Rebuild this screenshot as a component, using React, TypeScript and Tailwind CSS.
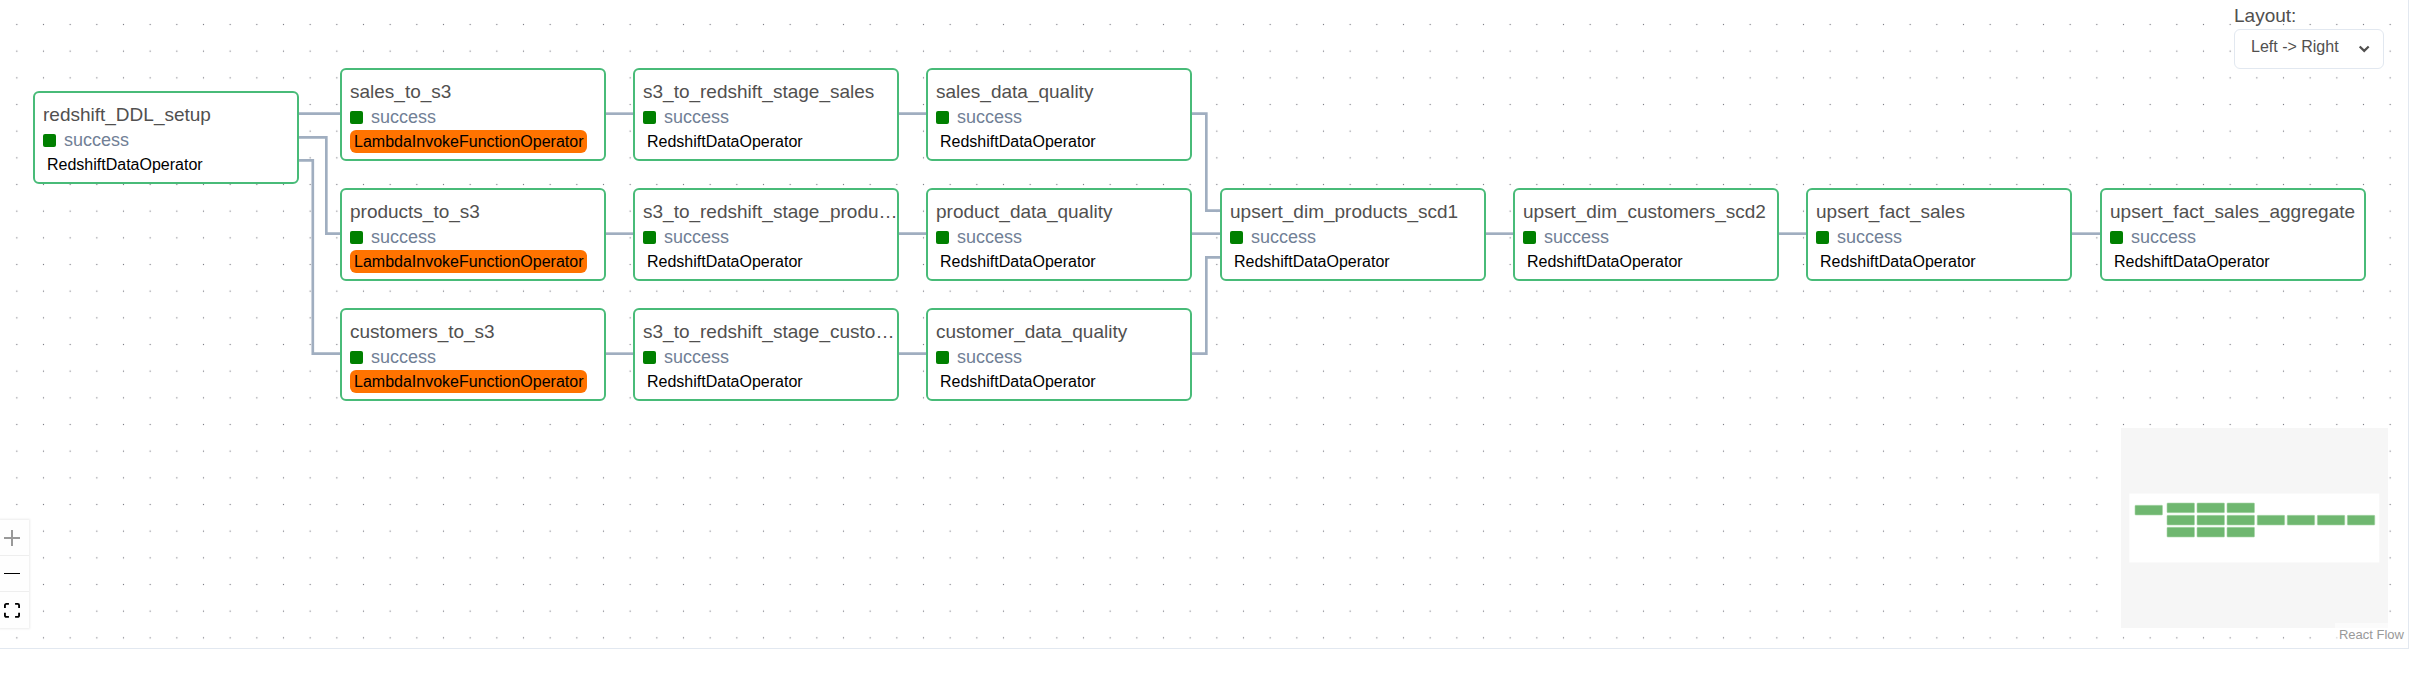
import React from "react";

type TaskNode = {
  name: string;
  x: number;
  y: number;
  operator: string;
};

const REDSHIFT = "RedshiftDataOperator";
const LAMBDA = "LambdaInvokeFunctionOperator";

const nodes: TaskNode[] = [
  { name: "redshift_DDL_setup", x: 33, y: 91, operator: REDSHIFT },
  { name: "sales_to_s3", x: 340, y: 68, operator: LAMBDA },
  { name: "products_to_s3", x: 340, y: 188, operator: LAMBDA },
  { name: "customers_to_s3", x: 340, y: 308, operator: LAMBDA },
  { name: "s3_to_redshift_stage_sales", x: 633, y: 68, operator: REDSHIFT },
  { name: "s3_to_redshift_stage_produ…", x: 633, y: 188, operator: REDSHIFT },
  { name: "s3_to_redshift_stage_custo…", x: 633, y: 308, operator: REDSHIFT },
  { name: "sales_data_quality", x: 926, y: 68, operator: REDSHIFT },
  { name: "product_data_quality", x: 926, y: 188, operator: REDSHIFT },
  { name: "customer_data_quality", x: 926, y: 308, operator: REDSHIFT },
  { name: "upsert_dim_products_scd1", x: 1220, y: 188, operator: REDSHIFT },
  { name: "upsert_dim_customers_scd2", x: 1513, y: 188, operator: REDSHIFT },
  { name: "upsert_fact_sales", x: 1806, y: 188, operator: REDSHIFT },
  { name: "upsert_fact_sales_aggregate", x: 2100, y: 188, operator: REDSHIFT },
];

const edges = [
  "M298 113.67H341",
  "M298 137.33H326.33V233.67H341",
  "M298 160.33H312.8V353.67H341",
  "M604 113.67H635",
  "M604 233.67H635",
  "M604 353.67H635",
  "M890 113.67H928",
  "M890 233.67H928",
  "M890 353.67H928",
  "M1190 113.67H1206.33V210.67H1222",
  "M1190 233.67H1222",
  "M1190 353.67H1206.33V257.33H1222",
  "M1484 233.67H1515",
  "M1777 233.67H1808",
  "M2070 233.67H2102",
];

const miniNodes: [number, number][] = [
  [14, 77.3],
  [46, 75],
  [46, 87.3],
  [46, 99.3],
  [76, 75],
  [76, 87.3],
  [76, 99.3],
  [106, 75],
  [106, 87.3],
  [106, 99.3],
  [136.2, 87.3],
  [166.2, 87.3],
  [196.3, 87.3],
  [226.3, 87.3],
];

function Task({ node }: { node: TaskNode }) {
  const lambda = node.operator === LAMBDA;
  return (
    <article
      className="absolute flex h-[93px] w-[266px] flex-col items-start rounded-md border-2 border-[#48bb78] bg-white pt-2.5 pl-2"
      style={{ left: node.x, top: node.y }}
    >
      <h2 className="text-[19px] leading-6 whitespace-nowrap text-[#51504f]">{node.name}</h2>
      <div className="flex items-center gap-2">
        <span className="size-[13px] rounded-xs bg-[#008000]" />
        <span className="text-[18px] leading-[26px] text-[#718096]">success</span>
      </div>
      <span
        className={
          lambda
            ? "rounded-md bg-[#ff7300] px-1 text-[16px] leading-[23px] text-black"
            : "rounded-md px-1 text-[16px] leading-[23px] text-black"
        }
      >
        {node.operator}
      </span>
    </article>
  );
}

function ControlButton({ label, children, last, disabled }: { label: string; children: React.ReactNode; last?: boolean; disabled?: boolean }) {
  return (
    <button
      type="button"
      aria-label={label}
      disabled={disabled}
      className={
        last
          ? "flex h-9 w-full items-center justify-start bg-[#fefefe] pl-1 text-black"
          : "flex h-9 w-full items-center justify-start border-b border-[#eeeeee] bg-[#fefefe] pl-1 text-black disabled:text-[#999999]"
      }
    >
      {children}
    </button>
  );
}

export default function App() {
  return (
    <div className="flex h-screen bg-white pr-[13px] pb-9 font-['Liberation_Sans',Arial,sans-serif]">
      <main className="relative min-w-0 flex-1 overflow-hidden border-r border-b border-[#e2e8f0]">
        <svg className="absolute inset-0 size-full" aria-hidden="true">
          <pattern id="dots" x="3.5" y="11.17" width="26.6667" height="26.6667" patternUnits="userSpaceOnUse">
            <circle cx="13.333" cy="13.333" r="0.65" fill="#81818a" />
          </pattern>
          <rect width="100%" height="100%" fill="url(#dots)" />
          <g fill="none" stroke="#a0aec0" strokeWidth="2.67">
            {edges.map((d) => (
              <path key={d} d={d} />
            ))}
          </g>
        </svg>

        {nodes.map((node) => (
          <Task key={node.name} node={node} />
        ))}

        <div className="absolute top-[3px] right-6 flex w-[150px] flex-col">
          <label htmlFor="layout" className="pb-px text-[19px] leading-[25px] text-[#51504f]">
            Layout:
          </label>
          <div className="relative">
            <select
              id="layout"
              className="h-10 w-full appearance-none rounded-md border border-[#e2e8f0] bg-white pb-1 pl-4 text-[16px] text-[#51504f]"
            >
              <option>Left -&gt; Right</option>
              <option>Right -&gt; Left</option>
              <option>Top -&gt; Bottom</option>
              <option>Bottom -&gt; Top</option>
            </select>
            <svg
              className="pointer-events-none absolute top-[11px] right-[11px] size-[18px]"
              viewBox="0 0 18 18"
              fill="none"
              stroke="#51504f"
              strokeWidth="2.2"
              aria-hidden="true"
            >
              <path d="M4.7 6.5L9.2 10.9L13.7 6.5" />
            </svg>
          </div>
        </div>

        <div className="absolute bottom-5 left-0 flex w-[29px] flex-col shadow-[0_0_2px_1px_rgba(0,0,0,0.08)]">
          <ControlButton label="zoom in" disabled>
            <svg className="size-4" viewBox="0 0 16 16" fill="currentColor">
              <path d="M7 0h2v7h7v2H9v7H7V9H0V7h7z" />
            </svg>
          </ControlButton>
          <ControlButton label="zoom out">
            <svg className="size-4" viewBox="0 0 16 16" fill="currentColor">
              <path d="M0 7h16v1H0z" />
            </svg>
          </ControlButton>
          <ControlButton label="fit view" last>
            <svg className="h-[15px] w-4" viewBox="0 0 32 30" fill="currentColor">
              <path d="M3.692 4.63c0-.53.4-.938.939-.938h5.215V0H4.708C2.13 0 0 2.054 0 4.63v5.216h3.692V4.631zM27.354 0h-5.2v3.692h5.17c.53 0 .984.4.984.939v5.215H32V4.631A4.624 4.624 0 0027.354 0zm.954 24.83c0 .532-.4.94-.939.94h-5.215v3.768h5.215c2.577 0 4.631-2.13 4.631-4.707v-5.139h-3.692v5.139zm-23.677.94c-.531 0-.939-.4-.939-.94v-5.138H0v5.139c0 2.577 2.13 4.707 4.708 4.707h5.138V25.77H4.631z" />
            </svg>
          </ControlButton>
        </div>

        <div className="absolute right-5 bottom-5 h-[200px] w-[267px] bg-white">
          <svg className="size-full" viewBox="0 0 267 200" role="img" aria-label="Mini map">
            <g fill="#6fb770" stroke="#a9d6aa" strokeWidth="0.6">
              {miniNodes.map(([x, y]) => (
                <rect key={`${x}-${y}`} x={x} y={y} width="27.5" height="9.7" rx="0.7" />
              ))}
            </g>
            <path d="M0 0H267V200H0ZM8.3 65.5V134.5H258.3V65.5Z" fill="#f6f6f6" fillRule="evenodd" />
          </svg>
        </div>

        <a
          href="https://reactflow.dev"
          className="absolute right-0 bottom-0 bg-white/50 px-1 pb-0.5 text-[13px] leading-[23px] text-[#999999]"
        >
          React Flow
        </a>
      </main>
    </div>
  );
}
